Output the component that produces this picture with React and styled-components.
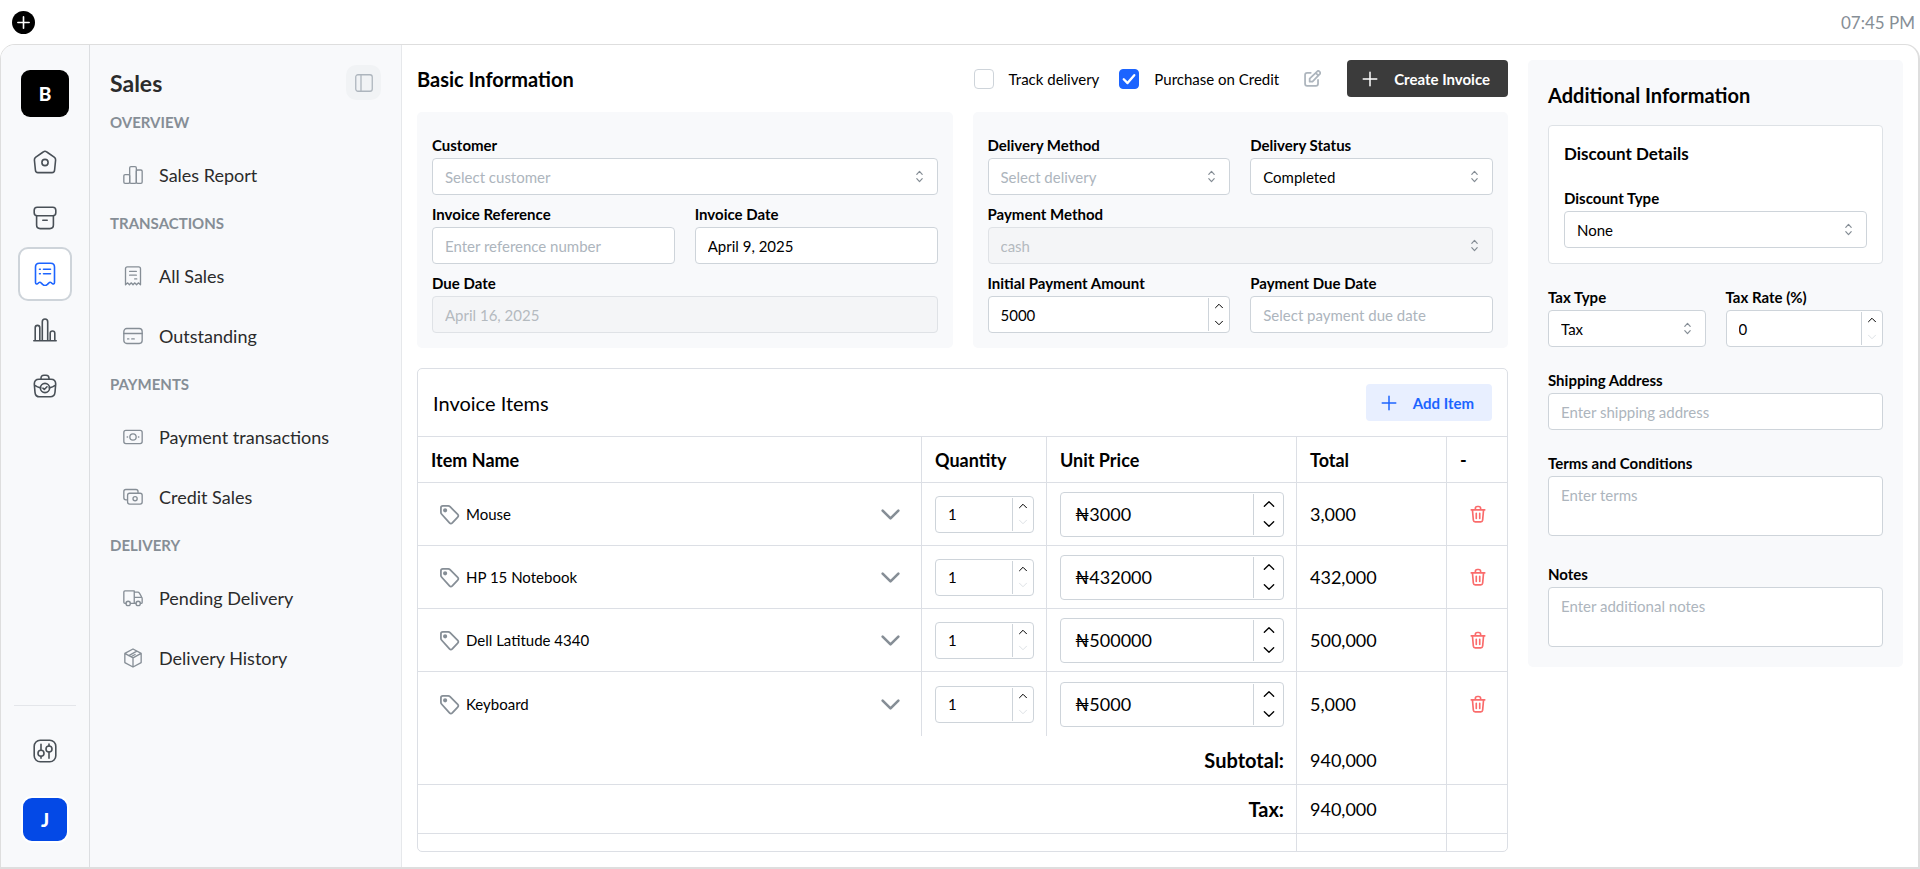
import { useId, useState } from 'react';
import styled, { createGlobalStyle, css } from 'styled-components';

const icons = {
  home: (
    <>
      <path d="M12 1.2c.7 0 1.2.3 1.8.8l7.4 5.2c1 .8 1.5 1.6 1.4 2.8l-1 10c-.1 1.7-1 2.6-2.6 2.6H5c-1.6 0-2.5-.9-2.6-2.6l-1-10c-.1-1.2.4-2 1.4-2.8L10.2 2c.6-.5 1.1-.8 1.8-.8z" />
      <circle cx="12" cy="12.5" r="3.1" />
    </>
  ),
  archive: (
    <>
      <rect x="1.2" y="1.2" width="21.6" height="8.6" rx="3" />
      <path d="M3.600 9.800V19c0 2.300 1.200 3.600 3.600 3.600h9.600c2.400 0 3.600-1.300 3.600-3.600V9.800M9.800 14.200h4.400" />
    </>
  ),
  receipt: (
    <>
      <path d="M2.500 20.500V5c0-2.500 1.300-3.800 3.800-3.800h11.400c2.500 0 3.800 1.300 3.800 3.800v15.500c0 1.600-1.700 2-2.600.8-1-1.400-2.200-1.400-3.200-.2l-1.300 1.300c-1.400 1.300-3.400 1.300-4.800 0l-1.300-1.300c-1-1.200-2.200-1.200-3.200.2-.9 1.200-2.600.8-2.600-.8z" />
      <path d="M10.500 7.300h7M10.500 11.800h7M6.500 7.300h.8M6.500 11.800h.8" />
    </>
  ),
  bars: (
    <path d="M.8 22.800h22.400M2.200 22.500V9.700a2.300 2.300 0 0 1 4.600 0v12.800M9.300 22.500V3.700a2.700 2.700 0 0 1 5.400 0v18.800M17.200 22.500v-7.200a2.300 2.300 0 0 1 4.600 0v7.200" />
  ),
  bag: (
    <>
      <path d="M8 5.200V4.300C8 2.300 9 1.200 11 1.200h2c2 0 3 1.100 3 3.100v.9" />
      <path d="M1.300 10c0-3.200 1.500-4.800 4.700-4.800h12c3.200 0 4.700 1.600 4.700 4.800l-.7 8.300c-.3 3-1.700 4.500-4.800 4.500H6.800c-3.100 0-4.500-1.500-4.800-4.500zM1.500 11.200c2 1.500 3.900 2.300 6.200 2.700M22.500 11.200c-2 1.500-3.900 2.300-6.200 2.700" />
      <circle cx="12" cy="14" r="4.600" />
      <path d="m9.900 14.200 1.400 1.300 2.700-2.700" />
    </>
  ),
  sliders: (
    <>
      <rect x="1.200" y="1.200" width="21.600" height="21.600" rx="6" />
      <circle cx="8" cy="14.200" r="3" />
      <circle cx="16" cy="10" r="3" />
      <path d="M8 5.200v6M8 17.200v2M16 5v2M16 13v6.200" />
    </>
  ),
  panel: (
    <>
      <rect x="1" y="1" width="22" height="22" rx="3" />
      <path d="M8 1v22" />
    </>
  ),
  columns: (
    <>
      <rect x="1" y="11.5" width="7" height="10.5" rx="1.5" />
      <rect x="8" y="2" width="8" height="20" rx="1.5" />
      <rect x="16" y="6" width="7" height="16" rx="1.5" />
    </>
  ),
  slip: (
    <path d="M3 22.500V3.300C3 1.700 3.700 1 5.300 1h13.400C20.300 1 21 1.700 21 3.300v19.200l-2.600-2.300-2.100 2.300-2.100-2.300-2.200 2.300-2.200-2.300-2.100 2.300-2.100-2.300zM8 6.500h8M8 11h8M14 15.500h2.500" />
  ),
  card: (
    <>
      <rect x="1" y="3" width="22" height="18" rx="3.5" />
      <path d="M1 9h22M5.500 15.500h1.500M10.500 15.500h3" />
    </>
  ),
  cash: (
    <>
      <rect x="1" y="4" width="22" height="16" rx="2.5" />
      <circle cx="12" cy="12" r="3.8" />
      <path d="M5 12h.5M18.500 12h.5" />
    </>
  ),
  cashStack: (
    <>
      <path d="M5 15.500H3.500C1.800 15.500 1 14.700 1 13V5.500C1 3.800 1.800 3 3.500 3h12C17.200 3 18 3.800 18 5.500v1" />
      <rect x="5.500" y="7.500" width="17.500" height="13" rx="2.500" />
      <circle cx="14.500" cy="14" r="2.500" />
    </>
  ),
  truck: (
    <>
      <path d="M3.500 18.500H2.300c-.9 0-1.300-.4-1.300-1.300V4.800c0-.9.4-1.300 1.300-1.300h11.200v15M9 18.500h6.500M13.500 5h4.200c1 0 1.500.3 2 1.200l2.700 4.600c.4.600.6 1.200.6 2v4.500c0 .8-.4 1.200-1.200 1.200H21M13.500 11.200h9" />
      <circle cx="6.200" cy="18.500" r="2.600" />
      <circle cx="18.200" cy="18.500" r="2.600" />
    </>
  ),
  box: (
    <path d="M12 1.200 21.800 6.500v11L12 22.800 2.200 17.500v-11zM2.200 6.500l4.800 2.600M12 11.800l9.800-5.300M12 11.800v11M12 11.800 9.500 10.500M7 9.100l9.600-5.300M9.500 10.500l5-2.700M7 9.100l2.500 1.400" />
  ),
  tag: (
    <>
      <path d="M2.200 9.600V4.400c0-1.400.8-2.200 2.200-2.200h6.200c.8 0 1.400.3 2 .9l8.800 8.800c1 1 1 2.100 0 3.100l-6.200 6.600c-1 1-2.200 1-3.200 0l-8.900-9.900c-.6-.6-.9-1.200-.9-2.100z" />
      <circle cx="7" cy="7.200" r="1.400" fill="currentColor" />
    </>
  ),
  trash: (
    <path d="M3 6.500h18M4.600 6.500l1.200 13.700c.2 1.500 1 2.300 2.500 2.300h7.400c1.500 0 2.300-.8 2.500-2.300l1.200-13.700M8.500 6.500v-2c0-1.700.8-2.500 2.500-2.500h2c1.700 0 2.500.8 2.500 2.500v2M9.700 11v7M14.300 11v7" />
  ),
  edit: (
    <path d="M9.500 4H4.500C2.500 4 1.500 5 1.500 7v12.500c0 2 1 3 3 3h12.300c2 0 3-1 3-3V14M8 16.500v-4.200L18.800 1.900c.8-.8 1.900-.8 2.700 0l1 1c.8.800.8 1.900 0 2.700L12 16.500zM16.500 4.200l3.800 3.800" />
  ),
  plus: <path d="M12 3v18M3 12h18" />,
  down: <path d="M3 7.500 12 16.500l9-9" />,
  caretUp: <path d="M5 15.500 12 8.500l7 7" />,
  caretDown: <path d="M5 8.500l7 7 7-7" />,
  selector: <path d="M7 8 12 2.500 17 8M7 16l5 5.500 5-5.500" />,
  check: <path d="M3 12.500 9.500 19 21 5.500" />,
};

const Icon = ({ name, size = 20, stroke = 1.5 }) => (
  <svg
    width={size}
    height={size}
    viewBox="0 0 24 24"
    fill="none"
    stroke="currentColor"
    strokeWidth={stroke}
    strokeLinecap="round"
    strokeLinejoin="round"
    aria-hidden="true"
  >
    {icons[name]}
  </svg>
);

const menu = [
  { title: 'OVERVIEW', links: [['columns', 'Sales Report']] },
  {
    title: 'TRANSACTIONS',
    links: [
      ['slip', 'All Sales'],
      ['card', 'Outstanding'],
    ],
  },
  {
    title: 'PAYMENTS',
    links: [
      ['cash', 'Payment transactions'],
      ['cashStack', 'Credit Sales'],
    ],
  },
  {
    title: 'DELIVERY',
    links: [
      ['truck', 'Pending Delivery'],
      ['box', 'Delivery History'],
    ],
  },
];

const rail = [
  ['home', 'Home'],
  ['archive', 'Inventory'],
  ['receipt', 'Sales'],
  ['bars', 'Reports'],
  ['bag', 'Business'],
];

const startItems = [
  { name: 'Mouse', quantity: 1, price: 3000 },
  { name: 'HP 15 Notebook', quantity: 1, price: 432000 },
  { name: 'Dell Latitude 4340', quantity: 1, price: 500000 },
  { name: 'Keyboard', quantity: 1, price: 5000 },
];

const format = (n) => n.toLocaleString('en-US');

const TextField = ({ label, ...rest }) => {
  const id = useId();
  return (
    <StField>
      <StLabel htmlFor={id}>{label}</StLabel>
      <StInput id={id} {...rest} />
    </StField>
  );
};

const AreaField = ({ label, ...rest }) => {
  const id = useId();
  return (
    <StField>
      <StLabel htmlFor={id}>{label}</StLabel>
      <StTextarea id={id} {...rest} />
    </StField>
  );
};

const SelectField = ({ label, options, empty, disabled }) => {
  const id = useId();
  const [value, setValue] = useState(empty ? '' : options[0]);
  return (
    <StField>
      <StLabel htmlFor={id}>{label}</StLabel>
      <StSelectWrap>
        <StSelect
          id={id}
          value={value}
          $empty={value === ''}
          disabled={disabled}
          onChange={(e) => setValue(e.target.value)}
        >
          {empty && <option value="">{empty}</option>}
          {options.map((o) => (
            <option key={o}>{o}</option>
          ))}
        </StSelect>
        <StSelectIcon>
          <Icon name="selector" size={13} stroke={2.2} />
        </StSelectIcon>
      </StSelectWrap>
    </StField>
  );
};

const NumberBox = ({ id, value, onChange, min = 0, prefix = '', large, ...rest }) => {
  const change = (n) => onChange(Math.max(min, n));
  return (
    <StNumber $large={large}>
      <StNumberInput
        id={id}
        $large={large}
        inputMode="numeric"
        value={`${prefix}${value}`}
        onChange={(e) => change(Number(e.target.value.replace(/\D/g, '')))}
        {...rest}
      />
      <StSpin $large={large}>
        <StSpinButton type="button" aria-label="Increase" onClick={() => change(value + 1)}>
          <Icon name="caretUp" size={large ? 16 : 12} stroke={2} />
        </StSpinButton>
        <StSpinButton
          type="button"
          aria-label="Decrease"
          disabled={value <= min}
          onClick={() => change(value - 1)}
        >
          <Icon name="caretDown" size={large ? 16 : 12} stroke={2} />
        </StSpinButton>
      </StSpin>
    </StNumber>
  );
};

const NumberField = ({ label, initial }) => {
  const id = useId();
  const [value, setValue] = useState(initial);
  return (
    <StField>
      <StLabel htmlFor={id}>{label}</StLabel>
      <NumberBox id={id} value={value} onChange={setValue} />
    </StField>
  );
};

const Check = ({ label, defaultChecked }) => (
  <StCheckLabel>
    <StCheckBox>
      <input type="checkbox" defaultChecked={defaultChecked} />
      <Icon name="check" size={14} stroke={4} />
    </StCheckBox>
    {label}
  </StCheckLabel>
);

const InvoiceItems = () => {
  const [items, setItems] = useState(startItems);
  const total = items.reduce((sum, i) => sum + i.quantity * i.price, 0);

  const update = (index, patch) =>
    setItems(items.map((item, i) => (i === index ? { ...item, ...patch } : item)));
  const remove = (index) => setItems(items.filter((_, i) => i !== index));
  const add = () => setItems([...items, { name: 'Mouse', quantity: 1, price: 3000 }]);

  return (
    <StItems>
      <StItemsHead>
        <StItemsTitle>Invoice Items</StItemsTitle>
        <StButton type="button" $light onClick={add}>
          <Icon name="plus" size={18} stroke={2} />
          Add Item
        </StButton>
      </StItemsHead>
      <StTable>
        <colgroup>
          <col />
          <col width="125" />
          <col width="250" />
          <col width="150" />
          <col width="61" />
        </colgroup>
        <thead>
          <tr>
            <th>Item Name</th>
            <th>Quantity</th>
            <th>Unit Price</th>
            <th>Total</th>
            <th>-</th>
          </tr>
        </thead>
        <tbody>
          {items.map((item, i) => (
            <tr key={i}>
              <td>
                <StItemPicker>
                  <Icon name="tag" size={21} stroke={2} />
                  <select
                    aria-label="Item"
                    value={item.name}
                    onChange={(e) => update(i, { name: e.target.value })}
                  >
                    {startItems.map((o) => (
                      <option key={o.name}>{o.name}</option>
                    ))}
                  </select>
                  <Icon name="down" size={21} stroke={3} />
                </StItemPicker>
              </td>
              <td>
                <NumberBox
                  aria-label="Quantity"
                  min={1}
                  value={item.quantity}
                  onChange={(quantity) => update(i, { quantity })}
                />
              </td>
              <td>
                <NumberBox
                  aria-label="Unit price"
                  large
                  prefix="₦"
                  value={item.price}
                  onChange={(price) => update(i, { price })}
                />
              </td>
              <td>{format(item.quantity * item.price)}</td>
              <td>
                <StTrash type="button" aria-label="Remove item" onClick={() => remove(i)}>
                  <Icon name="trash" size={18} stroke={2.2} />
                </StTrash>
              </td>
            </tr>
          ))}
        </tbody>
        <tfoot>
          <tr>
            <th colSpan={3} scope="row">Subtotal:</th>
            <td>{format(total)}</td>
            <td />
          </tr>
          <tr>
            <th colSpan={3} scope="row">Tax:</th>
            <td>{format(total)}</td>
            <td />
          </tr>
          <tr>
            <td colSpan={3} />
            <td />
            <td />
          </tr>
        </tfoot>
      </StTable>
    </StItems>
  );
};

const App = () => {
  return (
    <>
      <GlobalStyle />
      <Layout>
        <StTopBar>
          <StAddButton type="button" aria-label="New">
            <Icon name="plus" size={15} stroke={2.6} />
          </StAddButton>
          <StTime>07:45 PM</StTime>
        </StTopBar>
        <StShell>
          <StRail>
            <StLogo>B</StLogo>
            {rail.map(([icon, label]) => (
              <StRailLink key={label} href="#" aria-label={label} $active={label === 'Sales'}>
                <Icon name={icon} size={24} stroke={1.6} />
              </StRailLink>
            ))}
            <StRailBottom>
              <StRailLink href="#" aria-label="Settings">
                <Icon name="sliders" size={24} stroke={1.6} />
              </StRailLink>
              <StAvatar type="button">J</StAvatar>
            </StRailBottom>
          </StRail>

          <StSidebar>
            <StSidebarHead>
              <StSidebarTitle>Sales</StSidebarTitle>
              <StToggle type="button" aria-label="Collapse">
                <Icon name="panel" size={18} stroke={1.7} />
              </StToggle>
            </StSidebarHead>
            {menu.map((group) => (
              <div key={group.title}>
                <StGroupTitle>{group.title}</StGroupTitle>
                {group.links.map(([icon, label]) => (
                  <StMenuLink key={label} href="#">
                    <Icon name={icon} size={20} stroke={1.6} />
                    {label}
                  </StMenuLink>
                ))}
              </div>
            ))}
          </StSidebar>

          <StContent>
            <StMain>
              <StMainHead>
                <StTitle>Basic Information</StTitle>
                <StActions>
                  <Check label="Track delivery" />
                  <Check label="Purchase on Credit" defaultChecked />
                  <StEdit type="button" aria-label="Edit">
                    <Icon name="edit" size={17} stroke={2.5} />
                  </StEdit>
                  <StButton type="button">
                    <Icon name="plus" size={18} stroke={2} />
                    Create Invoice
                  </StButton>
                </StActions>
              </StMainHead>
              <StCards>
                <StCard>
                  <SelectField label="Customer" empty="Select customer" options={[]} />
                  <StPair>
                    <TextField label="Invoice Reference" placeholder="Enter reference number" />
                    <TextField label="Invoice Date" defaultValue="April 9, 2025" />
                  </StPair>
                  <TextField label="Due Date" defaultValue="April 16, 2025" disabled />
                </StCard>
                <StCard>
                  <StPair>
                    <SelectField label="Delivery Method" empty="Select delivery" options={[]} />
                    <SelectField label="Delivery Status" options={['Completed']} />
                  </StPair>
                  <SelectField label="Payment Method" options={['cash']} disabled />
                  <StPair>
                    <NumberField label="Initial Payment Amount" initial={5000} />
                    <TextField label="Payment Due Date" placeholder="Select payment due date" />
                  </StPair>
                </StCard>
              </StCards>
              <InvoiceItems />
            </StMain>

            <StAside>
              <StTitle>Additional Information</StTitle>
              <StDiscount>
                <h3>Discount Details</h3>
                <SelectField label="Discount Type" options={['None']} />
              </StDiscount>
              <StAsideFields>
                <StPair>
                  <SelectField label="Tax Type" options={['Tax']} />
                  <NumberField label="Tax Rate (%)" initial={0} />
                </StPair>
                <TextField label="Shipping Address" placeholder="Enter shipping address" />
                <AreaField label="Terms and Conditions" placeholder="Enter terms" />
                <AreaField label="Notes" placeholder="Enter additional notes" />
              </StAsideFields>
            </StAside>
          </StContent>
        </StShell>
      </Layout>
    </>
  );
};

const GlobalStyle = createGlobalStyle`
  * {
    box-sizing: border-box;
  }

  body {
    margin: 0;
    background: #fff;
    color: #000;
    font-family: Lato, 'Noto Sans', sans-serif;
    font-size: 16px;
  }

  button, input, select, textarea {
    font: inherit;
    color: inherit;
  }

  button {
    padding: 0;
    border: none;
    background: none;
    cursor: pointer;
  }

  h1, h2, h3 {
    margin: 0;
  }

  a {
    color: inherit;
    text-decoration: none;
  }

  svg {
    display: block;
    flex-shrink: 0;
  }
`;

const Layout = styled.div`
  display: flex;
  flex-direction: column;
  height: 100vh;
`;

const StTopBar = styled.header`
  display: flex;
  align-items: center;
  justify-content: space-between;
  height: 44px;
  padding: 0 5px 0 12px;
`;

const StAddButton = styled.button`
  display: grid;
  place-items: center;
  width: 23px;
  height: 23px;
  border-radius: 50%;
  background: #000;
  color: #fff;
`;

const StTime = styled.time`
  font-size: 17px;
  color: #868e96;
`;

const StShell = styled.div`
  display: flex;
  flex: 1;
  min-height: 0;
  border: 1px solid #dedede;
  border-right-width: 2px;
  border-bottom-width: 2px;
  border-radius: 15px 15px 0 0;
  overflow: hidden;
`;

const StRail = styled.nav`
  display: flex;
  flex-direction: column;
  align-items: center;
  gap: 2px;
  width: 89px;
  padding: 25px 13px 24px;
  border-right: 1px solid #dcdee1;
  background: #f8f9fb;
`;

const StLogo = styled.div`
  display: grid;
  place-items: center;
  width: 48px;
  height: 47px;
  margin-bottom: 16px;
  border-radius: 9px;
  background: #000;
  color: #fff;
  font-size: 19px;
  font-weight: 900;
`;

const StRailLink = styled.a`
  display: grid;
  place-items: center;
  width: 54px;
  height: 54px;
  border: 2px solid transparent;
  border-radius: 10px;
  color: #495057;

  ${({ $active }) =>
    $active &&
    css`
      border-color: #ced4da;
      background: #fff;
      color: #1c64ff;
    `}
`;

const StRailBottom = styled.div`
  display: flex;
  flex-direction: column;
  align-items: center;
  gap: 18px;
  width: 100%;
  margin-top: auto;
  padding-top: 18px;
  border-top: 1px solid #e4e6ea;
`;

const StAvatar = styled.button`
  width: 48px;
  height: 47px;
  border: 2px solid #fff;
  border-radius: 11px;
  background: #0449e6;
  color: #fff;
  font-size: 19px;
  font-weight: 900;
`;

const StSidebar = styled.aside`
  width: 312px;
  padding: 20px 20px 0;
  border-right: 1px solid #e6e8eb;
  background: #f8f9fb;
`;

const StSidebarHead = styled.div`
  display: flex;
  align-items: center;
  justify-content: space-between;
  margin-bottom: 4px;
`;

const StSidebarTitle = styled.h1`
  font-size: 23px;
  font-weight: 700;
  line-height: 30px;
  color: #2b2b2b;
`;

const StToggle = styled.button`
  display: grid;
  place-items: center;
  width: 35px;
  height: 35px;
  border-radius: 10px;
  background: #f1f3f5;
  color: #adb5bd;
`;

const StGroupTitle = styled.h2`
  padding: 6px 0 11px;
  font-size: 15px;
  font-weight: 700;
  line-height: 24px;
  color: #868e96;
`;

const StMenuLink = styled.a`
  display: flex;
  align-items: center;
  gap: 16px;
  height: 60px;
  padding-left: 13px;
  font-size: 18px;
  color: #2b2b2b;

  svg {
    color: #868e96;
  }
`;

const StContent = styled.div`
  display: flex;
  flex: 1;
  gap: 20px;
  min-width: 0;
  padding: 15px;
`;

const StMain = styled.main`
  display: flex;
  flex: 1;
  flex-direction: column;
  min-width: 0;
`;

const StMainHead = styled.div`
  display: flex;
  align-items: center;
  justify-content: space-between;
  margin-bottom: 15px;
`;

const StTitle = styled.h2`
  font-size: 20px;
  font-weight: 700;
  line-height: 30px;
`;

const StActions = styled.div`
  display: flex;
  align-items: center;
  gap: 20px;
`;

const StCheckLabel = styled.label`
  display: flex;
  align-items: center;
  gap: 15px;
  font-size: 15px;
`;

const StCheckBox = styled.span`
  display: grid;
  place-items: center;
  color: transparent;

  input {
    grid-area: 1 / 1;
    appearance: none;
    width: 20px;
    height: 20px;
    margin: 0;
    border: 1px solid #ced4da;
    border-radius: 4px;
    background: #fff;
  }

  input:checked {
    border-color: #1c64ff;
    background: #1c64ff;
  }

  input:checked + svg {
    color: #fff;
  }

  svg {
    grid-area: 1 / 1;
    z-index: 1;
    pointer-events: none;
  }
`;

const StEdit = styled.button`
  margin: 0 6px 0 5px;
  color: #adb5bd;
`;

const StButton = styled.button`
  display: flex;
  align-items: center;
  gap: 15px;
  height: 37px;
  padding: 0 18px 0 14px;
  border-radius: 4px;
  background: ${({ $light }) => ($light ? '#e8efff' : '#3b3b3b')};
  color: ${({ $light }) => ($light ? '#1c64ff' : '#fff')};
  font-size: 15px;
  font-weight: 700;
`;

const StCards = styled.div`
  display: grid;
  grid-template-columns: 1fr 1fr;
  gap: 20px;
`;

const StCard = styled.section`
  display: flex;
  flex-direction: column;
  gap: 8px;
  padding: 22px 15px 15px;
  border-radius: 5px;
  background: #f8f9fb;
`;

const StPair = styled.div`
  display: grid;
  grid-template-columns: 1fr 1fr;
  gap: 20px;
`;

const StField = styled.div`
  display: flex;
  flex-direction: column;
  gap: 2px;
  min-width: 0;
`;

const StLabel = styled.label`
  font-size: 15px;
  font-weight: 700;
  line-height: 22px;
`;

const box = css`
  width: 100%;
  border: 1px solid #ced4da;
  border-radius: 4px;
  background: #fff;
  font-size: 15px;

  &::placeholder {
    color: #adb5bd;
    opacity: 1;
  }

  &:disabled {
    border-color: #dfe2e6;
    background: #f4f5f7;
    color: #b4babf;
    opacity: 1;
  }
`;

const StInput = styled.input`
  ${box}
  height: 37px;
  padding: 0 12px;
`;

const StTextarea = styled.textarea`
  ${box}
  display: block;
  height: 60px;
  margin-bottom: 5px;
  padding: 8px 12px;
  line-height: 20px;
  resize: none;
`;

const StSelectWrap = styled.div`
  display: grid;
  align-items: center;
`;

const StSelect = styled.select`
  ${box}
  grid-area: 1 / 1;
  appearance: none;
  height: 37px;
  padding: 0 32px 0 12px;
  color: ${({ $empty }) => ($empty ? '#adb5bd' : '#000')};
`;

const StSelectIcon = styled.span`
  grid-area: 1 / 1;
  justify-self: end;
  margin-right: 12px;
  color: #868e96;
  pointer-events: none;
`;

const StNumber = styled.div`
  display: flex;
  width: 100%;
  height: ${({ $large }) => ($large ? '45px' : '37px')};
  border: 1px solid #ced4da;
  border-radius: 4px;
  background: #fff;
`;

const StNumberInput = styled.input`
  flex: 1;
  min-width: 0;
  padding: 0 0 0 ${({ $large }) => ($large ? '14px' : '12px')};
  border: none;
  background: none;
  font-size: ${({ $large }) => ($large ? '18px' : '15px')};
`;

const StSpin = styled.div`
  display: flex;
  flex-direction: column;
  width: ${({ $large }) => ($large ? '30px' : '21px')};
  margin: 1px 0;
  border-left: 1px solid #ced4da;
`;

const StSpinButton = styled.button`
  display: grid;
  flex: 1;
  place-items: center;

  &:disabled {
    color: #dee2e6;
  }
`;

const StItems = styled.section`
  flex: 1;
  min-height: 0;
  margin-top: 20px;
  border: 1px solid #dcdfe5;
  border-radius: 5px;
  overflow: hidden;
`;

const StItemsHead = styled.div`
  display: flex;
  align-items: center;
  justify-content: space-between;
  padding: 15px;
`;

const StItemsTitle = styled.h2`
  font-size: 20px;
  font-weight: 400;
`;

const StTable = styled.table`
  width: 100%;
  table-layout: fixed;
  border-collapse: separate;
  border-spacing: 0;
  font-size: 18px;

  th, td {
    height: 63px;
    padding: 0 12px 0 13px;
    border-bottom: 1px solid #dcdfe5;
    text-align: left;
  }

  th + th, th + td, td + td {
    border-left: 1px solid #dcdfe5;
  }

  thead th {
    height: 47px;
    border-top: 1px solid #dcdfe5;
    font-weight: 700;
  }

  tbody tr:last-child td {
    height: 64px;
    border-bottom: none;
  }

  tfoot th, tfoot td {
    height: 49px;
  }

  tfoot th {
    font-size: 20px;
    font-weight: 700;
    text-align: right;
  }
`;

const StItemPicker = styled.div`
  display: flex;
  align-items: center;
  gap: 4px;
  padding: 0 8px;
  color: #868e96;

  select {
    flex: 1;
    appearance: none;
    height: 37px;
    padding: 0 2px;
    border: none;
    background: none;
    color: #000;
    font-size: 15px;
  }
`;

const StTrash = styled.button`
  display: grid;
  place-items: center;
  width: 100%;
  height: 36px;
  color: #fa6b6b;
`;

const StAside = styled.aside`
  align-self: flex-start;
  width: 375px;
  padding: 20px 20px 15px;
  border-radius: 5px;
  background: #f8f9fb;
`;

const StDiscount = styled.section`
  margin: 15px 0 22px;
  padding: 15px;
  border: 1px solid #dee2e6;
  border-radius: 4px;
  background: #fff;

  h3 {
    margin-bottom: 20px;
    font-size: 17px;
    font-weight: 700;
    line-height: 26px;
  }
`;

const StAsideFields = styled.div`
  display: flex;
  flex-direction: column;
  gap: 22px;
`;

export default App;
